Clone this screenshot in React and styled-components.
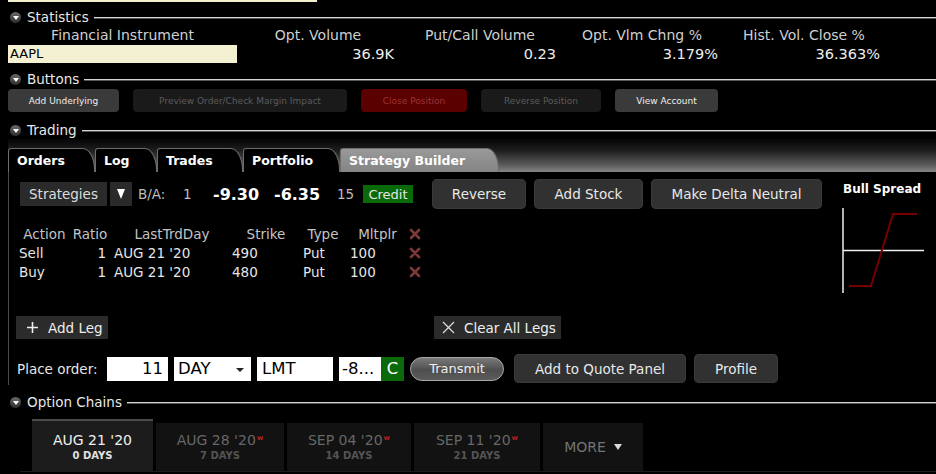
import React from "react";
import styled, { createGlobalStyle } from "styled-components";

const GlobalStyle = createGlobalStyle`
  html, body {
    margin: 0;
    padding: 0;
    background: #000;
  }
  body {
    font-family: "DejaVu Sans", Verdana, sans-serif;
    color: #ddd;
  }
`;

const Page = styled.div`
  width: 936px;
  height: 474px;
  overflow: hidden;
  background: #000;
`;

const TopStrip = styled.div`
  margin-left: 8px;
  width: 309px;
  height: 2px;
  background: #f2efcc;
`;

const SectionHeader = styled.div`
  display: flex;
  align-items: center;
  height: 18px;
  margin-top: ${(p) => p.$mt}px;
  padding-left: 10px;
`;

const Toggle = styled.span`
  width: 11px;
  height: 11px;
  border-radius: 50%;
  background: linear-gradient(#6a6a6a, #2c2c2c);
  display: flex;
  align-items: center;
  justify-content: center;
  flex-shrink: 0;
  &::after {
    content: "";
    border-left: 3px solid transparent;
    border-right: 3px solid transparent;
    border-top: 4px solid #fff;
    margin-top: 1px;
  }
`;

const SectionTitle = styled.span`
  margin-left: 6px;
  font-size: 13.5px;
  color: #e8e8e8;
  white-space: nowrap;
`;

const Rule = styled.span`
  flex: 1;
  height: 1px;
  margin-left: 5px;
  background: #d6d6d6;
  box-shadow: 0 1px 0 #555;
`;

const StatsGrid = styled.div`
  display: grid;
  grid-template-columns: 229px repeat(4, 162px);
  grid-template-rows: 19px 18px;
  margin-left: 8px;
`;

const StatLabel = styled.div`
  text-align: center;
  font-size: 14px;
  line-height: 19px;
  color: #cfcfcf;
  white-space: nowrap;
`;

const StatValue = styled.div`
  text-align: right;
  padding-right: 5px;
  font-size: 14.5px;
  line-height: 18px;
  color: #eee;
`;

const SymbolBox = styled.div`
  background: #f3f1d2;
  color: #000;
  font-size: 13px;
  line-height: 18px;
  padding-left: 2px;
`;

const ButtonsRow = styled.div`
  display: flex;
  gap: 14px;
  margin: 1px 0 0 8px;
`;

const smallVariants = {
  normal: { bg: "#3a3a3a", fg: "#eee" },
  disabled: { bg: "#1a1a1a", fg: "#5c5c5c" },
  danger: { bg: "#5a0000", fg: "#9a3434" },
};

const SmallButton = styled.div`
  width: ${(p) => p.$w}px;
  height: 23px;
  border-radius: 4px;
  display: flex;
  align-items: center;
  justify-content: center;
  font-size: 9px;
  white-space: nowrap;
  background: ${(p) => smallVariants[p.$variant].bg};
  color: ${(p) => smallVariants[p.$variant].fg};
`;

const TabBar = styled.div`
  margin-left: 8px;
  height: 33px;
  display: flex;
  align-items: flex-end;
  background: linear-gradient(#050505 0%, #1e1e1e 35%, #5c5c5c 80%, #858585 100%);
`;

const Tab = styled.div`
  width: ${(p) => p.$w}px;
  height: 24px;
  box-sizing: border-box;
  padding-left: 8px;
  font-size: 12.5px;
  font-weight: bold;
  line-height: 23px;
  white-space: nowrap;
  color: #fff;
  border: 1px solid #6d6d6d;
  border-bottom: none;
  border-radius: 3px 12px 0 0 / 3px 22px 0 0;
  background: ${(p) => (p.$active ? "linear-gradient(#999, #848484)" : "#000")};
`;

const Panel = styled.div`
  margin-left: 8px;
  height: 213px;
  border-left: 1px solid #4a4a4a;
  display: flex;
`;

const Main = styled.div`
  flex: 0 0 833px;
  padding-top: 7px;
`;

const Side = styled.div`
  padding: 9px 0 0 1px;
`;

const SideTitle = styled.div`
  font-size: 12px;
  font-weight: bold;
  line-height: 16px;
  color: #fff;
  white-space: nowrap;
`;

const Chart = styled.svg`
  display: block;
  margin-top: 11px;
  margin-left: -1px;
`;

const StrategyRow = styled.div`
  display: flex;
  align-items: center;
  height: 30px;
  padding-left: 11px;
`;

const Picker = styled.div`
  width: ${(p) => p.$w}px;
  height: 24px;
  margin-right: ${(p) => p.$mr}px;
  background: #2a2a2a;
  display: flex;
  align-items: center;
  justify-content: center;
  font-size: 13.5px;
  color: #ddd;
`;

const DownArrow = styled.span`
  border-left: 4px solid transparent;
  border-right: 4px solid transparent;
  border-top: 10px solid #fff;
`;

const Quote = styled.span`
  width: ${(p) => p.$w}px;
  font-size: ${(p) => (p.$big ? 16 : 13.5)}px;
  font-weight: ${(p) => (p.$big ? "bold" : "normal")};
  color: ${(p) => (p.$big ? "#fff" : "#bdbdbd")};
  white-space: nowrap;
`;

const CreditTag = styled.span`
  width: 50px;
  height: 18px;
  margin-right: 19px;
  background: #0a6a0a;
  color: #e6e6e6;
  font-size: 13px;
  display: flex;
  align-items: center;
  justify-content: center;
`;

const ActionButton = styled.div`
  width: ${(p) => p.$w}px;
  height: ${(p) => p.$h || 30}px;
  margin-right: ${(p) => p.$mr || 0}px;
  background: #313131;
  border-radius: 5px;
  box-shadow: inset 0 0 0 1px #3a3a3a;
  display: flex;
  align-items: center;
  justify-content: center;
  font-size: 13.5px;
  color: #e8e8e8;
  white-space: nowrap;
`;

const LegsGrid = styled.div`
  display: grid;
  grid-template-columns: 51px 40px 118px 72px 50px 55px 20px;
  grid-auto-rows: 19px;
  align-items: center;
  margin: 15px 0 0 10px;
  font-size: 13.5px;
  white-space: nowrap;
`;

const HeadCell = styled.div`
  text-align: center;
  color: #c4c4c4;
  padding-left: ${(p) => p.$pl || 0}px;
  padding-right: ${(p) => p.$pr || 0}px;
`;

const Cell = styled.div`
  text-align: ${(p) => p.$align || "left"};
  padding-left: ${(p) => p.$pl || 0}px;
  padding-right: ${(p) => p.$pr || 0}px;
  color: #e6e6e6;
`;

const RemoveCell = styled.div`
  display: flex;
  justify-content: center;
`;

const LegActions = styled.div`
  display: flex;
  margin-top: 35px;
  height: 23px;
`;

const LegButton = styled.div`
  width: ${(p) => p.$w}px;
  margin-left: ${(p) => p.$ml}px;
  padding-left: ${(p) => p.$pl}px;
  gap: ${(p) => p.$gap}px;
  box-sizing: border-box;
  background: #2b2b2b;
  display: flex;
  align-items: center;
  font-size: 13.5px;
  color: #eee;
  white-space: nowrap;
`;

const OrderRow = styled.div`
  display: flex;
  align-items: center;
  height: 29px;
  margin-top: 15px;
  padding-left: 8px;
`;

const OrderLabel = styled.span`
  width: 90px;
  font-size: 13.5px;
  color: #e6e6e6;
`;

const Field = styled.div`
  position: relative;
  width: ${(p) => p.$w}px;
  height: 24px;
  margin-right: ${(p) => p.$mr ?? 6}px;
  box-sizing: border-box;
  padding: 0 ${(p) => p.$pr || 0}px 0 ${(p) => p.$pl || 0}px;
  background: ${(p) => (p.$green ? "#0a6a0a" : "#fff")};
  color: ${(p) => (p.$green ? "#fff" : "#000")};
  display: flex;
  align-items: center;
  justify-content: ${(p) => (p.$right ? "flex-end" : p.$center ? "center" : "flex-start")};
  font-size: 16.5px;
  white-space: nowrap;
`;

const Caret = styled.span`
  position: absolute;
  right: 7px;
  top: 11px;
  border-left: 4px solid transparent;
  border-right: 4px solid transparent;
  border-top: 4px solid #222;
`;

const TransmitPill = styled.div`
  width: 94px;
  height: 24px;
  margin-right: 10px;
  box-sizing: border-box;
  border-radius: 12px;
  border: 1px solid #a8a8a8;
  background: linear-gradient(#7a7a7a, #4e4e4e 55%, #5c5c5c);
  display: flex;
  align-items: center;
  justify-content: center;
  font-size: 13px;
  color: #eee;
`;

const ChainTabs = styled.div`
  display: flex;
  align-items: flex-end;
  gap: 3px;
  height: 52px;
  margin: 8px 0 0 20px;
  padding-left: 12px;
  border-bottom: 1px solid #1c1c1c;
`;

const ChainTab = styled.div`
  width: ${(p) => p.$w}px;
  height: ${(p) => (p.$active ? 52 : 48)}px;
  box-sizing: border-box;
  border-top: ${(p) => (p.$active ? "2px solid #4c4c4c" : "none")};
  background: ${(p) => (p.$active ? "#1c1c1c" : "#121212")};
  display: flex;
  flex-direction: column;
  align-items: center;
  justify-content: ${(p) => (p.$more ? "center" : "flex-end")};
  padding-bottom: ${(p) => (p.$more ? 0 : 9)}px;
`;

const ChainDate = styled.div`
  font-size: 14px;
  line-height: 17px;
  color: ${(p) => (p.$active ? "#f0f0f0" : "#676767")};
  white-space: nowrap;
`;

const WeeklyMark = styled.sup`
  font-size: 7px;
  font-weight: bold;
  color: #b3201e;
  vertical-align: 5px;
  margin-left: 1px;
`;

const ChainDays = styled.div`
  font-size: 10px;
  font-weight: bold;
  line-height: 13px;
  color: ${(p) => (p.$active ? "#e2e2e2" : "#545454")};
`;

const MoreLabel = styled.div`
  display: flex;
  align-items: center;
  gap: 8px;
  font-size: 14px;
  color: #747474;
  &::after {
    content: "";
    border-left: 4px solid transparent;
    border-right: 4px solid transparent;
    border-top: 6px solid #d8d8d8;
  }
`;

const Section = ({ title, mt }) => (
  <SectionHeader $mt={mt}>
    <Toggle />
    <SectionTitle>{title}</SectionTitle>
    <Rule />
  </SectionHeader>
);

const RemoveIcon = () => (
  <svg width="12" height="12" viewBox="0 0 12 12">
    <path d="M2 2 L10 10 M10 2 L2 10" stroke="#7e3838" strokeWidth="2.6" strokeLinecap="round" />
  </svg>
);

const PlusIcon = () => (
  <svg width="11" height="11" viewBox="0 0 11 11">
    <path d="M5.5 0 V11 M0 5.5 H11" stroke="#eee" strokeWidth="1.6" />
  </svg>
);

const CrossIcon = () => (
  <svg width="13" height="13" viewBox="0 0 13 13">
    <path d="M1 1 L12 12 M12 1 L1 12" stroke="#ddd" strokeWidth="1.2" />
  </svg>
);

const stats = [
  { label: "Opt. Volume", value: "36.9K" },
  { label: "Put/Call Volume", value: "0.23" },
  { label: "Opt. Vlm Chng %", value: "3.179%" },
  { label: "Hist. Vol. Close %", value: "36.363%" },
];

const tabs = [
  { name: "Orders", w: 87 },
  { name: "Log", w: 62 },
  { name: "Trades", w: 86 },
  { name: "Portfolio", w: 97 },
  { name: "Strategy Builder", w: 159, active: true },
];

const legs = [
  { action: "Sell", ratio: 1, day: "AUG 21 '20", strike: 490, type: "Put", mult: 100 },
  { action: "Buy", ratio: 1, day: "AUG 21 '20", strike: 480, type: "Put", mult: 100 },
];

const chains = [
  { date: "AUG 21 '20", days: "0 DAYS", w: 121, active: true },
  { date: "AUG 28 '20", days: "7 DAYS", w: 128, weekly: true },
  { date: "SEP 04 '20", days: "14 DAYS", w: 124, weekly: true },
  { date: "SEP 11 '20", days: "21 DAYS", w: 126, weekly: true },
];

export default function App() {
  return (
    <Page>
      <GlobalStyle />
      <TopStrip />

      <Section title="Statistics" mt={6} />
      <StatsGrid>
        <StatLabel>Financial Instrument</StatLabel>
        {stats.map((s) => (
          <StatLabel key={s.label}>{s.label}</StatLabel>
        ))}
        <SymbolBox>AAPL</SymbolBox>
        {stats.map((s) => (
          <StatValue key={s.label}>{s.value}</StatValue>
        ))}
      </StatsGrid>

      <Section title="Buttons" mt={7} />
      <ButtonsRow>
        <SmallButton $w={111} $variant="normal">Add Underlying</SmallButton>
        <SmallButton $w={214} $variant="disabled">Preview Order/Check Margin Impact</SmallButton>
        <SmallButton $w={106} $variant="danger">Close Position</SmallButton>
        <SmallButton $w={120} $variant="disabled">Reverse Position</SmallButton>
        <SmallButton $w={103} $variant="normal">View Account</SmallButton>
      </ButtonsRow>

      <Section title="Trading" mt={9} />
      <TabBar>
        {tabs.map((t) => (
          <Tab key={t.name} $w={t.w} $active={t.active}>
            {t.name}
          </Tab>
        ))}
      </TabBar>

      <Panel>
        <Main>
          <StrategyRow>
            <Picker $w={87} $mr={3}>Strategies</Picker>
            <Picker $w={22} $mr={6}>
              <DownArrow />
            </Picker>
            <Quote $w={45}>B/A:</Quote>
            <Quote $w={30}>1</Quote>
            <Quote $w={61} $big>-9.30</Quote>
            <Quote $w={63} $big>-6.35</Quote>
            <Quote $w={26}>15</Quote>
            <CreditTag>Credit</CreditTag>
            <ActionButton $w={94} $mr={8}>Reverse</ActionButton>
            <ActionButton $w={109} $mr={8}>Add Stock</ActionButton>
            <ActionButton $w={171}>Make Delta Neutral</ActionButton>
          </StrategyRow>

          <LegsGrid>
            <HeadCell>Action</HeadCell>
            <HeadCell>Ratio</HeadCell>
            <HeadCell $pl={6}>LastTrdDay</HeadCell>
            <HeadCell $pl={4}>Strike</HeadCell>
            <HeadCell $pr={4}>Type</HeadCell>
            <HeadCell>Mltplr</HeadCell>
            <RemoveCell>
              <RemoveIcon />
            </RemoveCell>
            {legs.map((l) => (
              <React.Fragment key={l.strike}>
                <Cell>{l.action}</Cell>
                <Cell $align="right" $pr={4}>{l.ratio}</Cell>
                <Cell $pl={4}>{l.day}</Cell>
                <Cell $pl={4}>{l.strike}</Cell>
                <Cell $pl={3}>{l.type}</Cell>
                <Cell>{l.mult}</Cell>
                <RemoveCell>
                  <RemoveIcon />
                </RemoveCell>
              </React.Fragment>
            ))}
          </LegsGrid>

          <LegActions>
            <LegButton $w={92} $ml={7} $pl={11} $gap={10}>
              <PlusIcon />
              Add Leg
            </LegButton>
            <LegButton $w={127} $ml={326} $pl={8} $gap={9}>
              <CrossIcon />
              Clear All Legs
            </LegButton>
          </LegActions>

          <OrderRow>
            <OrderLabel>Place order:</OrderLabel>
            <Field $w={61} $right $pr={5}>11</Field>
            <Field $w={77} $pl={4}>
              DAY
              <Caret />
            </Field>
            <Field $w={76} $pl={5}>LMT</Field>
            <Field $w={42} $pl={3} $mr={0}>-8...</Field>
            <Field $w={23} $green $center>C</Field>
            <TransmitPill>Transmit</TransmitPill>
            <ActionButton $w={172} $h={29} $mr={8}>Add to Quote Panel</ActionButton>
            <ActionButton $w={84} $h={29}>Profile</ActionButton>
          </OrderRow>
        </Main>

        <Side>
          <SideTitle>Bull Spread</SideTitle>
          <Chart width="84" height="85" viewBox="0 0 84 85">
            <path d="M1 0 V85 M1 42.5 H82" stroke="#f0f0f0" strokeWidth="1.5" fill="none" />
            <path d="M7 78 H29 L51 6 H75" stroke="#760000" strokeWidth="2" fill="none" />
          </Chart>
        </Side>
      </Panel>

      <Section title="Option Chains" mt={8} />
      <ChainTabs>
        {chains.map((c) => (
          <ChainTab key={c.date} $w={c.w} $active={c.active}>
            <ChainDate $active={c.active}>
              {c.date}
              {c.weekly && <WeeklyMark>w</WeeklyMark>}
            </ChainDate>
            <ChainDays $active={c.active}>{c.days}</ChainDays>
          </ChainTab>
        ))}
        <ChainTab $w={100} $more>
          <MoreLabel>MORE</MoreLabel>
        </ChainTab>
      </ChainTabs>
    </Page>
  );
}
